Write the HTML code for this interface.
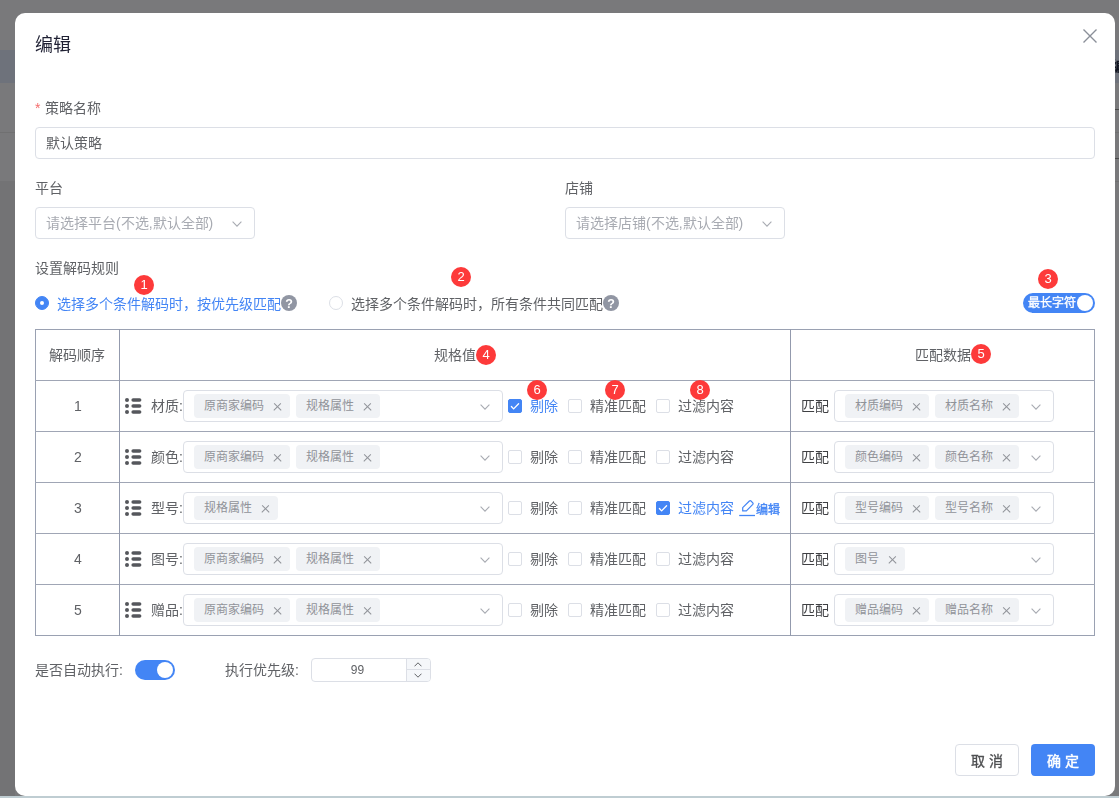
<!DOCTYPE html>
<html lang="zh-CN"><head><meta charset="utf-8">
<style>
*{box-sizing:border-box;margin:0;padding:0}
html,body{width:1119px;height:798px;overflow:hidden}
body{position:relative;background:#79797b;font-family:"Liberation Sans",sans-serif;color:#606266;font-size:14px}
.a{position:absolute}
.t{position:absolute;white-space:nowrap;line-height:20px;will-change:transform}
.dlg{position:absolute;left:15px;top:13px;width:1100px;height:783px;background:#fff;border-radius:10px}
.inp{position:absolute;border:1px solid #dcdfe6;border-radius:4px;background:#fff}
.chev{position:absolute;width:8px;height:8px;border-right:1px solid #a8abb2;border-bottom:1px solid #a8abb2;transform:rotate(45deg)}
.badge{position:absolute;width:20px;height:20px;border-radius:50%;background:#fd3a3a;color:#fff;font-size:13px;line-height:20px;text-align:center;will-change:transform}
.radio{position:absolute;width:14px;height:14px;border-radius:50%;border:1px solid #dcdfe6;background:#fff}
.cb{position:absolute;width:14px;height:14px;border-radius:2px;border:1px solid #dcdfe6;background:#fff}
.cb.on{background:#4385f5;border-color:#4385f5}
.q{position:absolute;width:16px;height:16px;border-radius:50%;background:#9196a3;color:#fff;font-size:12.5px;font-weight:bold;line-height:18px;text-align:center;will-change:transform}
.tag{position:absolute;height:24px;background:#f0f2f5;border-radius:4px;color:#909399;font-size:12px;line-height:24px;padding-left:10px;white-space:nowrap}
.tag i{position:absolute;right:9px;top:8px;width:8px;height:8px}
.tag i:before,.tag i:after{content:"";position:absolute;left:3.5px;top:-0.5px;width:1px;height:9.5px;background:#909399;transform:rotate(45deg)}
.tag i:after{transform:rotate(-45deg)}
.hl{position:absolute;background:#a0a6b5;height:1px}
.vl{position:absolute;background:#939aad;width:1px}
.blue{color:#4385f5}
.drag{position:absolute;width:17px;height:16px}
</style></head><body>
<!-- background page hints -->
<div class="a" style="left:0;top:50px;width:1119px;height:33px;background:#6e727b"></div>
<div class="a" style="left:0;top:132px;width:1119px;height:1px;background:#707071"></div>
<div class="a" style="left:0;top:181px;width:15px;height:615px;background:#737375"></div>
<div class="a" style="left:1115px;top:181px;width:4px;height:1px;background:#707071"></div>
<div class="a" style="left:1115px;top:109px;width:4px;height:1px;background:#4a4a4a"></div>
<div class="a" style="left:1115px;top:158px;width:4px;height:1px;background:#4a4a4a"></div>
<div class="t" style="left:1111px;top:56px;color:#10131f;font-weight:bold">编</div>
<div class="a" style="left:0;top:796px;width:1119px;height:2px;background:#bfcdd2"></div>

<div class="dlg"></div>
<div class="t" style="left:35px;top:35px;font-size:18px;line-height:20px;color:#1f2033">编辑</div>
<svg class="a" style="left:1082px;top:28px" width="16" height="16" viewBox="0 0 16 16"><path d="M1.5 1.5L14.5 14.5M14.5 1.5L1.5 14.5" stroke="#8a8f99" stroke-width="1.4" fill="none"/></svg>

<div class="t" style="left:35px;top:98px;color:#f56c6c">*</div>
<div class="t" style="left:45px;top:98px">策略名称</div>
<div class="inp" style="left:35px;top:127px;width:1060px;height:32px"></div>
<div class="t" style="left:46px;top:133px">默认策略</div>

<div class="t" style="left:35px;top:178px">平台</div>
<div class="inp" style="left:35px;top:207px;width:220px;height:32px"></div>
<div class="t" style="left:46px;top:213px;color:#a8abb2">请选择平台(不选,默认全部)</div>
<svg class="a" style="left:232px;top:221px" width="10" height="6" viewBox="0 0 10 6"><path d="M0.6 0.7L5 5.1L9.4 0.7" fill="none" stroke="#a8abb2" stroke-width="1.1"/></svg>
<div class="t" style="left:565px;top:178px">店铺</div>
<div class="inp" style="left:565px;top:207px;width:220px;height:32px"></div>
<div class="t" style="left:576px;top:213px;color:#a8abb2">请选择店铺(不选,默认全部)</div>
<svg class="a" style="left:762px;top:221px" width="10" height="6" viewBox="0 0 10 6"><path d="M0.6 0.7L5 5.1L9.4 0.7" fill="none" stroke="#a8abb2" stroke-width="1.1"/></svg>

<div class="t" style="left:35px;top:258px">设置解码规则</div>
<div class="badge" style="left:134px;top:275px">1</div>
<div class="badge" style="left:451px;top:267px">2</div>
<div class="badge" style="left:1038px;top:269px">3</div>

<div class="radio" style="left:35px;top:296px;background:#4385f5;border-color:#4385f5"></div>
<div class="a" style="left:40px;top:301px;width:4px;height:4px;border-radius:50%;background:#fff"></div>
<div class="t blue" style="left:57px;top:294px">选择多个条件解码时，按优先级匹配</div>
<div class="q" style="left:281px;top:295px">?</div>
<div class="radio" style="left:329px;top:296px"></div>
<div class="t" style="left:351px;top:294px">选择多个条件解码时，所有条件共同匹配</div>
<div class="q" style="left:603px;top:295px">?</div>

<div class="a" style="left:1023px;top:293px;width:72px;height:20px;border-radius:10px;background:#4385f5"></div>
<div class="a" style="left:1077px;top:295px;width:16px;height:16px;border-radius:50%;background:#fff"></div>
<div class="t" style="left:1028px;top:293px;font-size:12px;color:#fff;-webkit-text-stroke:0.35px #fff">最长字符</div>

<!-- table -->
<div class="a" style="left:35px;top:329px;width:1060px;height:307px;border:1px solid #9aa1b2"></div>
<div class="hl" style="left:35px;top:380px;width:1060px"></div>
<div class="hl" style="left:35px;top:431px;width:1060px"></div>
<div class="hl" style="left:35px;top:482px;width:1060px"></div>
<div class="hl" style="left:35px;top:533px;width:1060px"></div>
<div class="hl" style="left:35px;top:584px;width:1060px"></div>
<div class="vl" style="left:119px;top:329px;height:307px"></div>
<div class="vl" style="left:790px;top:329px;height:307px"></div>

<div class="t" style="left:49px;top:345px">解码顺序</div>
<div class="t" style="left:434px;top:345px">规格值</div>
<div class="badge" style="left:476px;top:345px">4</div>
<div class="t" style="left:915px;top:345px">匹配数据</div>
<div class="badge" style="left:971px;top:344px">5</div>

<div id="rows"></div>
<!--ROWS-->
<div class="t" style="left:36px;top:396px;width:84px;text-align:center">1</div>
<svg class="drag" style="left:125px;top:398px" viewBox="0 0 17 16"><g fill="#55575c"><circle cx="2" cy="2" r="2"/><circle cx="2" cy="8" r="2"/><circle cx="2" cy="14" r="2"/><rect x="6.4" y="0.25" width="10" height="3.5" rx="1.75"/><rect x="6.4" y="6.25" width="10" height="3.5" rx="1.75"/><rect x="6.4" y="12.25" width="10" height="3.5" rx="1.75"/></g></svg>
<div class="t" style="left:151px;top:396px;width:32px;overflow:hidden">材质:</div>
<div class="inp" style="left:183px;top:390px;width:320px;height:32px"></div>
<div class="tag" style="left:194px;top:394px;width:96px">原商家编码<i></i></div>
<div class="tag" style="left:296px;top:394px;width:84px">规格属性<i></i></div>
<svg class="a" style="left:480px;top:404px" width="10" height="6" viewBox="0 0 10 6"><path d="M0.6 0.7L5 5.1L9.4 0.7" fill="none" stroke="#a8abb2" stroke-width="1.1"/></svg>
<div class="cb on" style="left:508px;top:399px"></div>
<svg class="a" style="left:508px;top:399px" width="14" height="14" viewBox="0 0 14 14"><path d="M3.4 7.5L5.6 9.9L10.6 4.7" fill="none" stroke="#fff" stroke-width="1.3" stroke-linecap="round" stroke-linejoin="round"/></svg>
<div class="t blue" style="left:530px;top:396px">剔除</div>
<div class="cb" style="left:568px;top:399px"></div>
<div class="t" style="left:590px;top:396px">精准匹配</div>
<div class="cb" style="left:656px;top:399px"></div>
<div class="t" style="left:678px;top:396px">过滤内容</div>
<div class="t" style="left:801px;top:396px;color:#3f4043">匹配</div>
<div class="inp" style="left:834px;top:390px;width:220px;height:32px"></div>
<div class="tag" style="left:845px;top:394px;width:84px">材质编码<i></i></div>
<div class="tag" style="left:935px;top:394px;width:84px">材质名称<i></i></div>
<svg class="a" style="left:1031px;top:404px" width="10" height="6" viewBox="0 0 10 6"><path d="M0.6 0.7L5 5.1L9.4 0.7" fill="none" stroke="#a8abb2" stroke-width="1.1"/></svg>
<div class="badge" style="left:527px;top:380px">6</div>
<div class="badge" style="left:605px;top:380px">7</div>
<div class="badge" style="left:690px;top:380px">8</div>
<div class="t" style="left:36px;top:447px;width:84px;text-align:center">2</div>
<svg class="drag" style="left:125px;top:449px" viewBox="0 0 17 16"><g fill="#55575c"><circle cx="2" cy="2" r="2"/><circle cx="2" cy="8" r="2"/><circle cx="2" cy="14" r="2"/><rect x="6.4" y="0.25" width="10" height="3.5" rx="1.75"/><rect x="6.4" y="6.25" width="10" height="3.5" rx="1.75"/><rect x="6.4" y="12.25" width="10" height="3.5" rx="1.75"/></g></svg>
<div class="t" style="left:151px;top:447px;width:32px;overflow:hidden">颜色:</div>
<div class="inp" style="left:183px;top:441px;width:320px;height:32px"></div>
<div class="tag" style="left:194px;top:445px;width:96px">原商家编码<i></i></div>
<div class="tag" style="left:296px;top:445px;width:84px">规格属性<i></i></div>
<svg class="a" style="left:480px;top:455px" width="10" height="6" viewBox="0 0 10 6"><path d="M0.6 0.7L5 5.1L9.4 0.7" fill="none" stroke="#a8abb2" stroke-width="1.1"/></svg>
<div class="cb" style="left:508px;top:450px"></div>
<div class="t" style="left:530px;top:447px">剔除</div>
<div class="cb" style="left:568px;top:450px"></div>
<div class="t" style="left:590px;top:447px">精准匹配</div>
<div class="cb" style="left:656px;top:450px"></div>
<div class="t" style="left:678px;top:447px">过滤内容</div>
<div class="t" style="left:801px;top:447px;color:#3f4043">匹配</div>
<div class="inp" style="left:834px;top:441px;width:220px;height:32px"></div>
<div class="tag" style="left:845px;top:445px;width:84px">颜色编码<i></i></div>
<div class="tag" style="left:935px;top:445px;width:84px">颜色名称<i></i></div>
<svg class="a" style="left:1031px;top:455px" width="10" height="6" viewBox="0 0 10 6"><path d="M0.6 0.7L5 5.1L9.4 0.7" fill="none" stroke="#a8abb2" stroke-width="1.1"/></svg>
<div class="t" style="left:36px;top:498px;width:84px;text-align:center">3</div>
<svg class="drag" style="left:125px;top:500px" viewBox="0 0 17 16"><g fill="#55575c"><circle cx="2" cy="2" r="2"/><circle cx="2" cy="8" r="2"/><circle cx="2" cy="14" r="2"/><rect x="6.4" y="0.25" width="10" height="3.5" rx="1.75"/><rect x="6.4" y="6.25" width="10" height="3.5" rx="1.75"/><rect x="6.4" y="12.25" width="10" height="3.5" rx="1.75"/></g></svg>
<div class="t" style="left:151px;top:498px;width:32px;overflow:hidden">型号:</div>
<div class="inp" style="left:183px;top:492px;width:320px;height:32px"></div>
<div class="tag" style="left:194px;top:496px;width:84px">规格属性<i></i></div>
<svg class="a" style="left:480px;top:506px" width="10" height="6" viewBox="0 0 10 6"><path d="M0.6 0.7L5 5.1L9.4 0.7" fill="none" stroke="#a8abb2" stroke-width="1.1"/></svg>
<div class="cb" style="left:508px;top:501px"></div>
<div class="t" style="left:530px;top:498px">剔除</div>
<div class="cb" style="left:568px;top:501px"></div>
<div class="t" style="left:590px;top:498px">精准匹配</div>
<div class="cb on" style="left:656px;top:501px"></div>
<svg class="a" style="left:656px;top:501px" width="14" height="14" viewBox="0 0 14 14"><path d="M3.4 7.5L5.6 9.9L10.6 4.7" fill="none" stroke="#fff" stroke-width="1.3" stroke-linecap="round" stroke-linejoin="round"/></svg>
<div class="t blue" style="left:678px;top:498px">过滤内容</div>
<svg class="a" style="left:739px;top:500px" width="17" height="17" viewBox="0 0 17 17"><path d="M3.7 7.7L10.4 1.0Q11.2 0.4 12.0 1.0L13.8 2.8Q14.4 3.6 13.8 4.4L7.4 10.9L3.7 10.9Z" fill="none" stroke="#4385f5" stroke-width="1.2" stroke-linejoin="round"/><path d="M0.2 15.5H16" stroke="#4385f5" stroke-width="1.3"/></svg>
<div class="t blue" style="left:756px;top:500px;font-size:12px;-webkit-text-stroke:0.3px #4385f5">编辑</div>
<div class="t" style="left:801px;top:498px;color:#3f4043">匹配</div>
<div class="inp" style="left:834px;top:492px;width:220px;height:32px"></div>
<div class="tag" style="left:845px;top:496px;width:84px">型号编码<i></i></div>
<div class="tag" style="left:935px;top:496px;width:84px">型号名称<i></i></div>
<svg class="a" style="left:1031px;top:506px" width="10" height="6" viewBox="0 0 10 6"><path d="M0.6 0.7L5 5.1L9.4 0.7" fill="none" stroke="#a8abb2" stroke-width="1.1"/></svg>
<div class="t" style="left:36px;top:549px;width:84px;text-align:center">4</div>
<svg class="drag" style="left:125px;top:551px" viewBox="0 0 17 16"><g fill="#55575c"><circle cx="2" cy="2" r="2"/><circle cx="2" cy="8" r="2"/><circle cx="2" cy="14" r="2"/><rect x="6.4" y="0.25" width="10" height="3.5" rx="1.75"/><rect x="6.4" y="6.25" width="10" height="3.5" rx="1.75"/><rect x="6.4" y="12.25" width="10" height="3.5" rx="1.75"/></g></svg>
<div class="t" style="left:151px;top:549px;width:32px;overflow:hidden">图号:</div>
<div class="inp" style="left:183px;top:543px;width:320px;height:32px"></div>
<div class="tag" style="left:194px;top:547px;width:96px">原商家编码<i></i></div>
<div class="tag" style="left:296px;top:547px;width:84px">规格属性<i></i></div>
<svg class="a" style="left:480px;top:557px" width="10" height="6" viewBox="0 0 10 6"><path d="M0.6 0.7L5 5.1L9.4 0.7" fill="none" stroke="#a8abb2" stroke-width="1.1"/></svg>
<div class="cb" style="left:508px;top:552px"></div>
<div class="t" style="left:530px;top:549px">剔除</div>
<div class="cb" style="left:568px;top:552px"></div>
<div class="t" style="left:590px;top:549px">精准匹配</div>
<div class="cb" style="left:656px;top:552px"></div>
<div class="t" style="left:678px;top:549px">过滤内容</div>
<div class="t" style="left:801px;top:549px;color:#3f4043">匹配</div>
<div class="inp" style="left:834px;top:543px;width:220px;height:32px"></div>
<div class="tag" style="left:845px;top:547px;width:60px">图号<i></i></div>
<svg class="a" style="left:1031px;top:557px" width="10" height="6" viewBox="0 0 10 6"><path d="M0.6 0.7L5 5.1L9.4 0.7" fill="none" stroke="#a8abb2" stroke-width="1.1"/></svg>
<div class="t" style="left:36px;top:600px;width:84px;text-align:center">5</div>
<svg class="drag" style="left:125px;top:602px" viewBox="0 0 17 16"><g fill="#55575c"><circle cx="2" cy="2" r="2"/><circle cx="2" cy="8" r="2"/><circle cx="2" cy="14" r="2"/><rect x="6.4" y="0.25" width="10" height="3.5" rx="1.75"/><rect x="6.4" y="6.25" width="10" height="3.5" rx="1.75"/><rect x="6.4" y="12.25" width="10" height="3.5" rx="1.75"/></g></svg>
<div class="t" style="left:151px;top:600px;width:32px;overflow:hidden">赠品:</div>
<div class="inp" style="left:183px;top:594px;width:320px;height:32px"></div>
<div class="tag" style="left:194px;top:598px;width:96px">原商家编码<i></i></div>
<div class="tag" style="left:296px;top:598px;width:84px">规格属性<i></i></div>
<svg class="a" style="left:480px;top:608px" width="10" height="6" viewBox="0 0 10 6"><path d="M0.6 0.7L5 5.1L9.4 0.7" fill="none" stroke="#a8abb2" stroke-width="1.1"/></svg>
<div class="cb" style="left:508px;top:603px"></div>
<div class="t" style="left:530px;top:600px">剔除</div>
<div class="cb" style="left:568px;top:603px"></div>
<div class="t" style="left:590px;top:600px">精准匹配</div>
<div class="cb" style="left:656px;top:603px"></div>
<div class="t" style="left:678px;top:600px">过滤内容</div>
<div class="t" style="left:801px;top:600px;color:#3f4043">匹配</div>
<div class="inp" style="left:834px;top:594px;width:220px;height:32px"></div>
<div class="tag" style="left:845px;top:598px;width:84px">赠品编码<i></i></div>
<div class="tag" style="left:935px;top:598px;width:84px">赠品名称<i></i></div>
<svg class="a" style="left:1031px;top:608px" width="10" height="6" viewBox="0 0 10 6"><path d="M0.6 0.7L5 5.1L9.4 0.7" fill="none" stroke="#a8abb2" stroke-width="1.1"/></svg>
<!--/ROWS-->

<!-- bottom -->
<div class="t" style="left:35px;top:660px">是否自动执行:</div>
<div class="a" style="left:135px;top:660px;width:40px;height:20px;border-radius:10px;background:#4385f5"></div>
<div class="a" style="left:157px;top:662px;width:16px;height:16px;border-radius:50%;background:#fff"></div>
<div class="t" style="left:225px;top:660px">执行优先级:</div>
<div class="inp" style="left:311px;top:658px;width:120px;height:24px"></div>
<div class="a" style="left:406px;top:659px;width:24px;height:22px;background:#f5f7fa;border-left:1px solid #dcdfe6;border-radius:0 3px 3px 0"></div>
<div class="a" style="left:407px;top:669px;width:23px;height:1px;background:#dcdfe6"></div>
<svg class="a" style="left:414px;top:662px" width="8" height="5" viewBox="0 0 8 5"><path d="M0.5 4.3L4 0.8L7.5 4.3" fill="none" stroke="#606266" stroke-width="1"/></svg>
<svg class="a" style="left:414px;top:673px" width="8" height="5" viewBox="0 0 8 5"><path d="M0.5 0.7L4 4.2L7.5 0.7" fill="none" stroke="#606266" stroke-width="1"/></svg>
<div class="t" style="left:310px;top:660px;width:95px;text-align:center;font-size:12px">99</div>

<div class="inp" style="left:955px;top:744px;width:64px;height:32px"></div>
<div class="t" style="left:955px;top:751px;width:64px;text-align:center;color:#4f5052;-webkit-text-stroke:0.35px #4f5052;letter-spacing:4px;text-indent:4px">取消</div>
<div class="a" style="left:1031px;top:744px;width:64px;height:32px;background:#4385f5;border-radius:4px"></div>
<div class="t" style="left:1031px;top:751px;width:64px;text-align:center;color:#fff;-webkit-text-stroke:0.45px #fff;letter-spacing:4px;text-indent:4px">确定</div>
</body></html>
